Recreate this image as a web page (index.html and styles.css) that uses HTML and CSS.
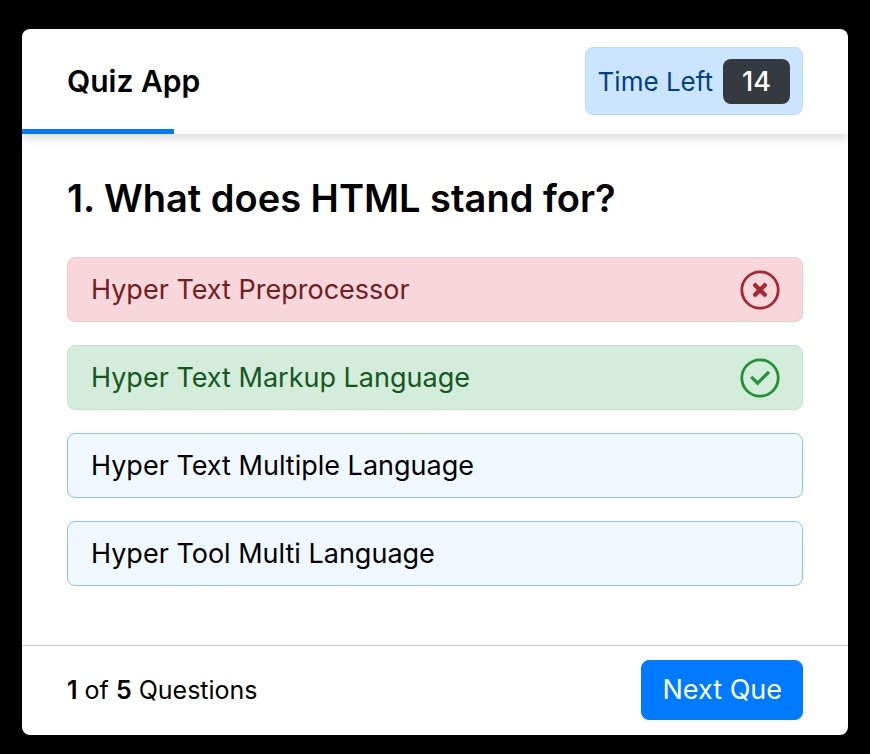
FILE: index.html
```html
<!DOCTYPE html>
<html lang="en">
<head>
<meta charset="utf-8">
<meta name="viewport" content="width=device-width, initial-scale=1">
<title>Quiz App</title>
<link rel="stylesheet" href="styles.css">
</head>
<body>
<main class="quiz">
  <header class="quiz-header">
    <h1 class="title">Quiz App</h1>
    <div class="timer">
      <span class="timer-label">Time Left</span>
      <span class="timer-seconds">14</span>
    </div>
    <div class="time-line"></div>
  </header>
  <section class="quiz-body">
    <h2 class="question">1. What does HTML stand for?</h2>
    <div class="options">
      <button type="button" class="option incorrect">
        <span>Hyper Text Preprocessor</span>
        <svg class="mark" viewBox="0 0 40 40" aria-hidden="true">
          <circle cx="20" cy="20" r="18.2" fill="none" stroke="currentColor" stroke-width="2.8"/>
          <path d="M15.2 15.2l9.6 9.6M24.8 15.2l-9.6 9.6" fill="none" stroke="currentColor" stroke-width="4.4" stroke-linecap="round"/>
        </svg>
      </button>
      <button type="button" class="option correct">
        <span>Hyper Text Markup Language</span>
        <svg class="mark" viewBox="0 0 40 40" aria-hidden="true">
          <circle cx="20" cy="20" r="18.2" fill="none" stroke="currentColor" stroke-width="2.8"/>
          <path d="M11.2 18.8l6.4 6.4L29 13.8" fill="none" stroke="currentColor" stroke-width="3.2"/>
        </svg>
      </button>
      <button type="button" class="option"><span>Hyper Text Multiple Language</span></button>
      <button type="button" class="option"><span>Hyper Tool Multi Language</span></button>
    </div>
  </section>
  <footer class="quiz-footer">
    <p class="count"><b>1</b> of <b>5</b> Questions</p>
    <button type="button" class="next">Next Que</button>
  </footer>
</main>
</body>
</html>
```
FILE: styles.css
```css
* {
  box-sizing: border-box;
  margin: 0;
}

body {
  padding: 29px 22px 19px;
  background: #000;
  color: #000;
  font-family: Inter, "Open Sans", sans-serif;
}

button {
  font: inherit;
  cursor: pointer;
}

.quiz {
  border-radius: 8px;
  background: #fff;
}

.quiz-header {
  position: relative;
  display: flex;
  align-items: center;
  justify-content: space-between;
  padding: 18px 45px 19px;
  border-radius: 8px 8px 0 0;
  box-shadow: 0 5px 8px rgba(0, 0, 0, 0.12);
  clip-path: inset(0 0 -16px 0);
}

.title {
  font-size: 30px;
  line-height: 40px;
  font-weight: 600;
}

.timer {
  display: flex;
  align-items: center;
  gap: 10px;
  padding: 11px 12px 10px;
  border: 1px solid #b8daff;
  border-radius: 8px;
  background: #cce5ff;
  color: #004085;
}

.timer-label {
  font-size: 26px;
  line-height: 40px;
}

.timer-seconds {
  min-width: 67px;
  border-radius: 8px;
  background: #343a40;
  color: #fff;
  font-size: 27px;
  line-height: 45px;
  font-weight: 500;
  text-align: center;
}

.time-line {
  position: absolute;
  bottom: 0;
  left: 0;
  width: 152px;
  height: 5px;
  background: #007bff;
}

.quiz-body {
  padding: 36px 45px 59px;
}

.question {
  font-size: 38px;
  line-height: 56px;
  font-weight: 600;
}

.options {
  display: grid;
  gap: 23px;
  padding-top: 31px;
}

.option {
  display: flex;
  align-items: center;
  justify-content: space-between;
  min-height: 65px;
  padding: 0 22px 0 23px;
  border: 1px solid #84c5fe;
  border-radius: 8px;
  background: #f0f8ff;
  color: #000;
  font-size: 27px;
  line-height: 40px;
  text-align: left;
}

.option.incorrect {
  border-color: #f5c6cb;
  background: #f8d7da;
  color: #721c24;
}

.option.correct {
  border-color: #c3e6cb;
  background: #d4edda;
  color: #155724;
}

.mark {
  flex: none;
  width: 40px;
  height: 40px;
}

.incorrect .mark {
  color: #a42834;
}

.correct .mark {
  color: #23903c;
}

.quiz-footer {
  display: flex;
  align-items: center;
  justify-content: space-between;
  padding: 14px 45px 15px;
  border-top: 1px solid #ccc;
}

.count {
  font-size: 25px;
  line-height: 40px;
}

.count b {
  font-weight: 600;
}

.next {
  padding: 0 20px;
  border: 1px solid #007bff;
  border-radius: 8px;
  background: #007bff;
  color: #fff;
  font-size: 27px;
  line-height: 58px;
}
```
